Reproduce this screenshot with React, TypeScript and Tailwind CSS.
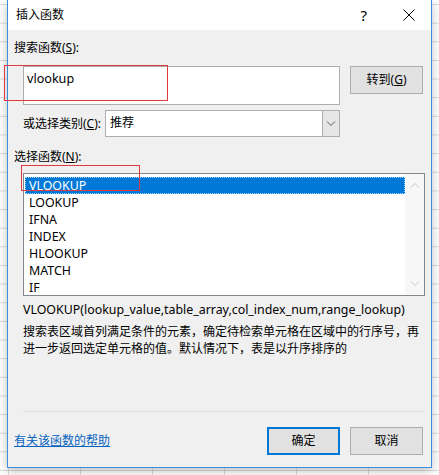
import React from "react";

// Insert-function dialog (Excel, Win10 look) sitting over the sheet grid.
const FUNCTIONS = ["VLOOKUP", "LOOKUP", "IFNA", "INDEX", "HLOOKUP", "MATCH", "IF"];

function Chevron({ up = false, className = "" }: { up?: boolean; className?: string }) {
  return (
    <svg width="10" height="6" viewBox="0 0 10 6" className={className}>
      <path
        d={up ? "M1 5.5 L5 1.5 L9 5.5" : "M1 0.5 L5 4.5 L9 0.5"}
        fill="none"
        stroke="currentColor"
        strokeWidth="1"
      />
    </svg>
  );
}

function Btn({ label, primary = false }: { label: React.ReactNode; primary?: boolean }) {
  return (
    <button
      type="button"
      className={
        "flex h-[28px] w-[73px] items-center justify-center bg-[#e1e1e1] text-[12px] text-black " +
        (primary ? "border-2 border-[#0078d7]" : "border border-[#adadad]")
      }
    >
      {label}
    </button>
  );
}

export default function App() {
  return (
    <div className="h-[475px] w-[439px] overflow-hidden bg-white bg-[linear-gradient(to_right,#dadada_1px,transparent_1px),linear-gradient(to_bottom,#dadada_1px,transparent_1px)] bg-[size:72px_18.65px] bg-[position:8px_4px] pl-[7px] font-['Noto_Sans','Noto_Sans_CJK_SC',sans-serif] text-[12px] leading-[16px] text-black">
      <div className="relative h-[468px] w-[425px] border-x border-b border-[#3d8ddb] bg-[#f0f0f0] shadow-[0_3px_10px_rgba(0,0,0,0.25)]">
        {/* title bar */}
        <div className="flex h-[30px] items-center bg-white pl-[8px]">
          <span>插入函数</span>
          <span className="ml-auto mr-[36px] text-[15px]">?</span>
          <svg width="12" height="12" viewBox="0 0 12 12" className="mr-[16px]">
            <path d="M0.5 0.5 L11.5 11.5 M11.5 0.5 L0.5 11.5" stroke="#000" strokeWidth="1" />
          </svg>
        </div>

        <div className="pt-[10px]">
          <div className="ml-[6px]">
            搜索函数(<span className="underline">S</span>):
          </div>

          <div className="mt-[10px] ml-[15px] flex items-start">
            <div className="h-[39px] w-[317px] border border-[#adadad] bg-white px-[3px] pt-[4px] text-[12.6px]">
              vlookup
            </div>
            <div className="ml-[10px]">
              <Btn
                label={
                  <>
                    转到(<span className="underline">G</span>)
                  </>
                }
              />
            </div>
          </div>

          <div className="mt-[5px] ml-[15px] flex items-center">
            <span className="w-[82px]">
              或选择类别(<span className="underline">C</span>):
            </span>
            <div className="flex h-[27px] w-[235px] border border-[#adadad] bg-white">
              <span className="flex-1 pl-[4px] pt-[4px]">推荐</span>
              <span className="flex w-[17px] items-center justify-center border-l border-[#adadad] bg-[#e6e6e6] text-[#606060]">
                <Chevron />
              </span>
            </div>
          </div>

          <div className="mt-[12px] ml-[6px]">
            选择函数(<span className="underline">N</span>):
          </div>

          <div className="mt-[8px] ml-[15px] flex h-[123px] w-[402px] border border-[#828790] bg-white">
            <ul className="flex-1 pt-[3px] pl-[1px] text-[12.4px] leading-[15px]">
              {FUNCTIONS.map((f, i) => (
                <li
                  key={f}
                  className={
                    "pl-[3px] " +
                    (i === 0
                      ? "border border-dotted border-[#9fd0ff] bg-[#0078d7] text-white"
                      : "border border-transparent")
                  }
                >
                  {f}
                </li>
              ))}
            </ul>
            <div className="flex w-[19px] flex-col items-center justify-between bg-[#f7f7f7] py-[8px] text-[#c4c4c4]">
              <Chevron up />
              <Chevron />
            </div>
          </div>

          <div className="mt-[6px] ml-[15px] text-[12.4px]">
            VLOOKUP(lookup_value,table_array,col_index_num,range_lookup)
          </div>
          <p className="mt-[5px] ml-[15px] w-[400px] leading-[17px]">
            搜索表区域首列满足条件的元素，确定待检索单元格在区域中的行序号，再进一步返回选定单元格的值。默认情况下，表是以升序排序的
          </p>

          <div className="mt-[54px] ml-[15px] h-px w-[402px] bg-[#dcdcdc]" />

          <div className="mt-[15px] flex items-center">
            <a href="#" className="ml-[6px] text-[#0563c1] underline">
              有关该函数的帮助
            </a>
            <div className="ml-auto mr-[8px] flex gap-[10px]">
              <Btn label="确定" primary />
              <Btn label="取消" />
            </div>
          </div>
        </div>

        {/* annotation boxes */}
        <div className="absolute left-[-4px] top-[65px] h-[36px] w-[164px] border border-[#e0393e]" />
        <div className="absolute left-[13px] top-[165px] h-[26px] w-[119px] border border-[#e0393e]" />
      </div>
    </div>
  );
}
